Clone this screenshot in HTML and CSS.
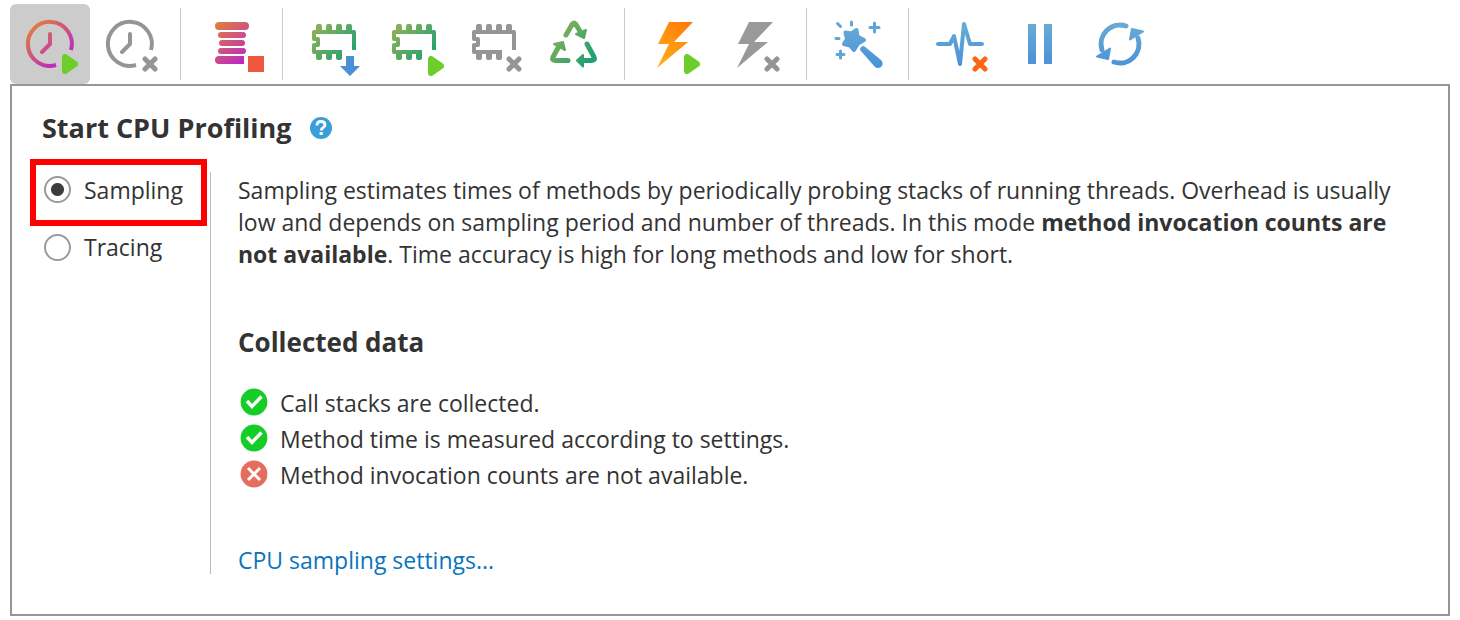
FILE: index.html
```
<!DOCTYPE html>
<html lang="en">
<head>
  <meta charset="UTF-8" />
  <meta name="viewport" content="width=device-width, initial-scale=1.0" />
  <title>Start CPU Profiling</title>
  <link rel="stylesheet" href="styles.css">
</head>
<body>
  <!-- shared gradients and badges -->
  <svg class="defs" aria-hidden="true">
    <defs>
      <linearGradient id="cpu" gradientUnits="userSpaceOnUse" x1="22" y1="20" x2="56" y2="60">
        <stop offset="0" stop-color="#e1803a" /><stop offset="1" stop-color="#b91fd0" />
      </linearGradient>
      <linearGradient id="memory" gradientUnits="userSpaceOnUse" x1="20" y1="20" x2="58" y2="54">
        <stop offset="0" stop-color="#94b154" /><stop offset="1" stop-color="#1fa173" />
      </linearGradient>
      <linearGradient id="bolt" gradientUnits="userSpaceOnUse" x1="54" y1="18" x2="24" y2="60">
        <stop offset="0" stop-color="#ff780a" /><stop offset="1" stop-color="#ffb014" />
      </linearGradient>
      <linearGradient id="blue" gradientUnits="userSpaceOnUse" x1="0" y1="18" x2="0" y2="62">
        <stop offset="0" stop-color="#68acd4" /><stop offset="1" stop-color="#4b92d8" />
      </linearGradient>
      <symbol id="play" viewBox="0 0 16 20">
        <path d="M3 3V17L13 10Z" fill="#6dce2b" stroke="#6dce2b" stroke-width="6" stroke-linejoin="round" />
      </symbol>
      <symbol id="cross" viewBox="0 0 16 16">
        <path d="M3 3L13 13M13 3L3 13" fill="none" stroke="currentColor" stroke-width="5" stroke-linecap="round" />
      </symbol>
      <symbol id="clock" viewBox="0 0 80 80">
        <path d="M61 46A22 22 0 1 0 46 61" />
        <path d="M40 30V40L32 48" stroke-linecap="round" stroke-linejoin="round" />
      </symbol>
      <symbol id="chip" viewBox="0 0 80 80">
        <path d="M60 46V28H20V35H24V41H20V48H48" stroke-linejoin="round" />
        <path d="M22 28V22Q22 20 24 20H26Q28 20 28 22V28ZM32 28V22Q32 20 34 20H36Q38 20 38 22V28ZM42 28V22Q42 20 44 20H46Q48 20 48 22V28ZM52 28V22Q52 20 54 20H56Q58 20 58 22V28ZM22 48V54Q22 56 24 56H26Q28 56 28 54V48ZM32 48V54Q32 56 34 56H36Q38 56 38 54V48ZM42 48V54Q42 56 44 56H46Q48 56 48 54V48Z" class="teeth" />
      </symbol>
      <symbol id="ok" viewBox="0 0 28 28">
        <circle cx="14" cy="14" r="13.400" fill="#14cd27" />
        <path d="M7 13L12 18.500L21.500 8.500" fill="none" stroke="#fff" stroke-width="3.400" />
      </symbol>
    </defs>
  </svg>

  <div class="window">
    <div class="toolbar">
      <button class="tool active" aria-label="Start CPU profiling">
        <svg viewBox="0 0 80 80"><use href="#clock" class="line cpu" /><use href="#play" x="52" y="50" width="16" height="20" /></svg>
      </button>
      <button class="tool" aria-label="Stop CPU profiling">
        <svg viewBox="0 0 80 80"><use href="#clock" class="line gray" /><use href="#cross" x="52" y="52" width="16" height="16" /></svg>
      </button>
      <span class="separator"></span>
      <button class="tool" aria-label="Stop stack telemetry">
        <svg viewBox="0 0 80 80">
          <g fill="url(#cpu)">
            <rect x="23" y="18" width="34" height="8" rx="4" />
            <rect x="26" y="28" width="28" height="6" rx="3" />
            <rect x="27" y="36" width="26" height="6" rx="3" />
            <rect x="26" y="44" width="28" height="6" rx="3" />
            <path d="M27 52H52V60H27A4 4 0 0 1 27 52Z" />
          </g>
          <rect x="56" y="52" width="16" height="16" fill="#ee573b" />
        </svg>
      </button>
      <span class="separator"></span>
      <button class="tool" aria-label="Capture memory snapshot">
        <svg viewBox="0 0 80 80"><use href="#chip" class="line memory" /><path d="M52 52H60V62H66L56 72L46 62H52Z" fill="#4a90d2" /></svg>
      </button>
      <button class="tool" aria-label="Start allocation recording">
        <svg viewBox="0 0 80 80"><use href="#chip" class="line memory" /><use href="#play" x="54" y="52" width="16" height="20" /></svg>
      </button>
      <button class="tool" aria-label="Stop allocation recording">
        <svg viewBox="0 0 80 80"><use href="#chip" class="line gray" /><use href="#cross" x="52" y="52" width="16" height="16" /></svg>
      </button>
      <button class="tool" aria-label="Force garbage collection">
        <svg viewBox="0 0 80 80">
          <path class="line memory thick" d="M32 31L38 20.500Q40 17.500 42 20.500L47 29M53 40L60 53Q61.500 56.500 58 56.500H47M34 56.500H21Q17.500 56.500 19 53L25 42" stroke-linecap="round" stroke-linejoin="round" />
          <path d="M42 30L52 26L50 34ZM43 56.500L49 51V62.500ZM20 40L29 38L31 46Z" fill="url(#memory)" stroke="url(#memory)" stroke-width="2" stroke-linejoin="round" />
        </svg>
      </button>
      <span class="separator"></span>
      <button class="tool" aria-label="Start monitor profiling">
        <svg viewBox="0 0 80 80"><path d="M33 18H57L38 38H52L21 64L33 40H22Z" fill="url(#bolt)" /><use href="#play" x="48" y="50" width="16" height="20" /></svg>
      </button>
      <button class="tool" aria-label="Stop monitor profiling">
        <svg viewBox="0 0 80 80"><path d="M33 18H57L38 38H52L21 64L33 40H22Z" fill="#999" /><use href="#cross" x="48" y="52" width="16" height="16" /></svg>
      </button>
      <span class="separator"></span>
      <button class="tool" aria-label="Inspections">
        <svg viewBox="0 0 80 80">
          <path d="M38.500 26L39.500 32.500L46 36L40 39.500L36 46L32 41.500L26 40L29 35L27.500 28.500L33.500 29.500Z" fill="url(#blue)" stroke="url(#blue)" stroke-width="4" stroke-linejoin="round" />
          <path d="M42 46Q42 42 46 42L63 56A4 4 0 0 1 57 63Z" fill="url(#blue)" />
          <path d="M19.500 19.500L22.500 22.500M33.500 18V21M18 34.500H21M56.500 19V28M52 23.500H61M22.500 47V54M19 50.500H26" fill="none" stroke="#5fa5d5" stroke-width="3" stroke-linecap="round" />
        </svg>
      </button>
      <span class="separator"></span>
      <button class="tool" aria-label="Clear telemetry">
        <svg viewBox="0 0 80 80">
          <path class="line blue" d="M18 40H30L34 32L40 60L44 20L50 40H62" stroke-linecap="round" stroke-linejoin="round" />
          <use href="#cross" class="orange" x="52" y="52" width="16" height="16" />
        </svg>
      </button>
      <button class="tool" aria-label="Pause">
        <svg viewBox="0 0 80 80"><path d="M28 20H36V60H28ZM44 20H52V60H44Z" fill="url(#blue)" /></svg>
      </button>
      <button class="tool" aria-label="Refresh">
        <svg viewBox="0 0 80 80">
          <path class="line blue thick" d="M46 22A19 19 0 0 0 22 46M34 58A19 19 0 0 0 58 34" stroke-linecap="round" />
          <path d="M17 52.500L30 44.500L28 55ZM63 27.500L50 35.500L52 25Z" fill="url(#blue)" stroke="url(#blue)" stroke-width="2" stroke-linejoin="round" />
        </svg>
      </button>
    </div>

    <div class="panel">
      <div class="title">
        <h1>Start CPU Profiling</h1>
        <button class="help" aria-label="Help">
          <svg viewBox="0 0 22 22">
            <circle cx="11" cy="11" r="11" fill="#389fd9" />
            <path d="M7 8.500Q7 4.500 11 4.500T15 8Q15 9.500 13 10.700Q11.200 11.700 11.200 13.500" fill="none" stroke="#fff" stroke-width="2.800" />
            <rect x="9.600" y="15" width="3.200" height="3" fill="#fff" />
          </svg>
        </button>
      </div>
      <div class="content">
        <div class="modes">
          <label class="mode highlighted"><input type="radio" name="mode" checked /> Sampling</label>
          <label class="mode"><input type="radio" name="mode" /> Tracing</label>
        </div>
        <div class="details">
          <p>Sampling estimates times of methods by periodically probing stacks of running threads. Overhead is usually low and depends on sampling period and number of threads. In this mode <b>method invocation counts are not available</b>. Time accuracy is high for long methods and low for short.</p>
          <h2>Collected data</h2>
          <ul class="data">
            <li><svg viewBox="0 0 28 28"><use href="#ok" /></svg>Call stacks are collected.</li>
            <li><svg viewBox="0 0 28 28"><use href="#ok" /></svg>Method time is measured according to settings.</li>
            <li>
              <svg viewBox="0 0 28 28"><circle cx="14" cy="14" r="13.400" fill="#e46d5e" /><path d="M8 8L20 20M20 8L8 20" stroke="#fff" stroke-width="3" /></svg>Method invocation counts are not available.
            </li>
          </ul>
          <a href="#">CPU sampling settings...</a>
        </div>
      </div>
    </div>
  </div>
</body>
</html>
```

FILE: styles.css
```
* {
  box-sizing: border-box;
}
body {
  margin: 0;
  background: #fff;
  color: #333;
  font-family: "Open Sans", "Noto Sans", sans-serif;
  font-size: 23px;
  line-height: 32px;
}
.defs {
  position: absolute;
  width: 0;
  height: 0;
}
.window {
  padding: 4px 10px;
}
.toolbar {
  display: flex;
}
.tool {
  width: 80px;
  height: 80px;
  padding: 0;
  border: none;
  border-radius: 6px;
  background: none;
  color: #959595;
}
.tool.active {
  background: #ccc;
}
.tool svg {
  display: block;
  width: 80px;
  height: 80px;
}
.separator {
  width: 1px;
  height: 72px;
  margin: 4px 11px 0 10px;
  background: #ccc;
}
.line {
  fill: none;
  stroke: var(--paint);
  stroke-width: 4px;
}
.thick {
  stroke-width: 5px;
}
.cpu {
  --paint: url(#cpu);
}
.memory {
  --paint: url(#memory);
}
.gray {
  --paint: #959595;
}
.blue {
  --paint: url(#blue);
}
.teeth {
  stroke: none;
  fill: var(--paint);
}
.orange {
  color: #ff6414;
}
.panel {
  border: 2px solid #979595;
  padding: 24px 30px 40px 18px;
}
.title {
  display: flex;
  align-items: center;
  gap: 18px;
  padding-left: 12px;
}
h1, h2 {
  margin: 0;
  font-size: 27px;
  line-height: 36px;
}
.help {
  padding: 0;
  border: none;
  background: none;
}
.help svg {
  display: block;
  width: 22px;
  height: 22px;
}
.content {
  display: flex;
  margin-top: 13px;
}
.modes {
  width: 180px;
  flex-shrink: 0;
}
.mode {
  display: flex;
  align-items: center;
  gap: 13px;
  width: 177px;
  height: 50px;
  padding-left: 14px;
}
.mode.highlighted {
  height: 67px;
  border: 6px solid #f00;
  padding: 0 0 6px 8px;
  margin-bottom: -4px;
}
.mode input {
  appearance: none;
  width: 27px;
  height: 27px;
  margin: 0;
  border: 2px solid #999;
  border-radius: 50%;
  background: #fff;
}
.mode input:checked {
  background: radial-gradient(circle, #3c3c3c 6px, #fff 7px);
}
.details {
  flex: 1;
  margin-top: 13px;
  border-left: 1px solid #bbb;
  padding-left: 27px;
}
p {
  margin: 2px 0 0;
}
h2 {
  margin-top: 54px;
  font-size: 26px;
}
.data {
  list-style: none;
  margin: 25px 0 0;
  padding: 0;
}
.data li {
  display: flex;
  align-items: center;
  gap: 12px;
  height: 36px;
}
.data svg {
  width: 28px;
  height: 28px;
  margin: 0 0 2px 2px;
}
a {
  display: block;
  margin-top: 53px;
  line-height: 28px;
  color: #0a74bd;
  text-decoration: none;
}
```
